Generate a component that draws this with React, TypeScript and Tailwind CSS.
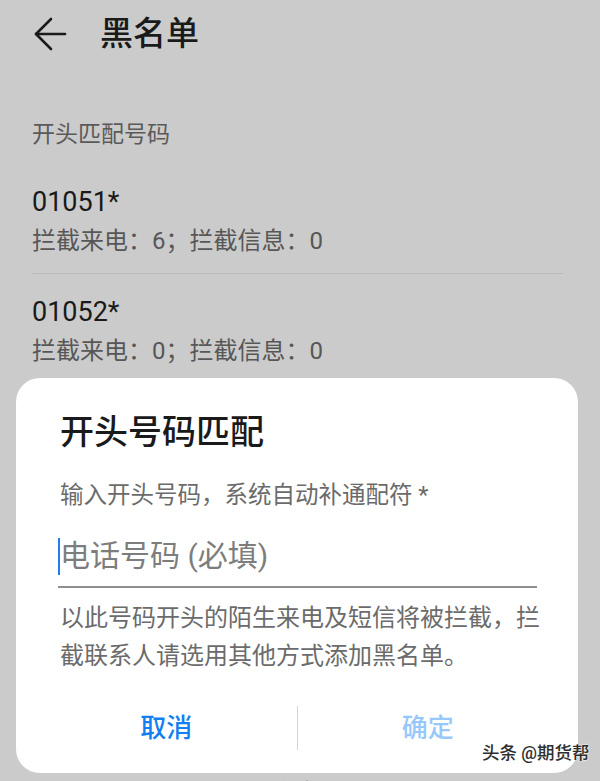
import React from 'react';

const font = { fontFamily: 'Roboto, "Noto Sans CJK SC", sans-serif' };

function BackArrow() {
  return (
    <svg width="34" height="34" viewBox="0 0 34 34" fill="none" stroke="#1a1a1a" strokeWidth="2.6" strokeLinecap="round" strokeLinejoin="round">
      <path d="M3 17h29" />
      <path d="M18 2L3 17l15 15" />
    </svg>
  );
}

const items = [
  { num: '01051*', calls: 6, sms: 0 },
  { num: '01052*', calls: 0, sms: 0 },
];

export default function App() {
  return (
    <div className="relative w-[600px] h-[781px] overflow-hidden bg-[#cbcbcb]" style={font}>
      {/* page under the dialog */}
      <div className="h-full flex flex-col">
        <header className="h-[68px] flex items-center pl-[33px] gap-[33px]">
          <BackArrow />
          <h1 className="text-[33px] leading-[40px] font-medium text-[#1a1a1a]">黑名单</h1>
        </header>

        <div className="px-[32px]">
          <p className="mt-[52px] text-[23px] leading-[30px] text-[#5a5a5a]">开头匹配号码</p>
          {items.map((it, i) => (
            <div key={it.num} className={i === 0 ? 'mt-[34px] pb-[17px] border-b border-[#bababa] mr-[5px]' : 'mt-[20px]'}>
              <p className="text-[27px] leading-[36px] text-[#1a1a1a]">{it.num}</p>
              <p className="mt-[6px] text-[24px] leading-[30px] text-[#575757]">
                拦截来电：{it.calls}；拦截信息：{it.sms}
              </p>
            </div>
          ))}
        </div>

        <div className="mt-auto -mb-[30px] h-[110px] flex flex-col items-center justify-end">
          <span className="text-[21px] leading-[40px] text-[#1a1a1a] pl-[4px]">添加</span>
        </div>
      </div>

      {/* dialog */}
      <div className="absolute left-[16px] top-[378px] w-[562px] h-[395px] rounded-[24px] bg-white flex flex-col">
        <div className="pl-[44px] pr-[37px]">
          <h2 className="pt-[33px] text-[34px] leading-[42px] font-medium text-[#1a1a1a]">开头号码匹配</h2>
          <p className="mt-[27px] text-[23.5px] leading-[30px] text-[#6b6b6b]">输入开头号码，系统自动补通配符 *</p>
          <div className="mt-[26px] pb-[10px] border-b-2 border-[#8f8f8f] mr-[4px] -ml-[2px] flex items-center">
            <span className="w-[2px] h-[37px] bg-[#1e7ef0]" />
            <span className="text-[30px] leading-[40px] text-[#7d7d7d]">电话号码 (必填)</span>
          </div>
          <p className="mt-[11px] text-[24px] leading-[38px] text-[#6b6b6b]">
            以此号码开头的陌生来电及短信将被拦截，拦截联系人请选用其他方式添加黑名单。
          </p>
        </div>
        <div className="mt-[31px] px-[20px] h-[44px] flex items-center">
          <button className="flex-1 text-[26px] font-medium text-[#137ff0]">取消</button>
          <span className="w-px h-[44px] bg-[#d6d6d6]" />
          <button className="flex-1 text-[26px] font-medium text-[#97c8fb]">确定</button>
        </div>
      </div>

      {/* watermark */}
      <div
        className="absolute left-[482px] top-[741px] text-[17.5px] leading-[24px] text-[#2e2e2e] font-medium"
        style={{ textShadow: '0 0 2px #fff, 0 0 2px #fff' }}
      >
        头条 @期货帮
      </div>
    </div>
  );
}
